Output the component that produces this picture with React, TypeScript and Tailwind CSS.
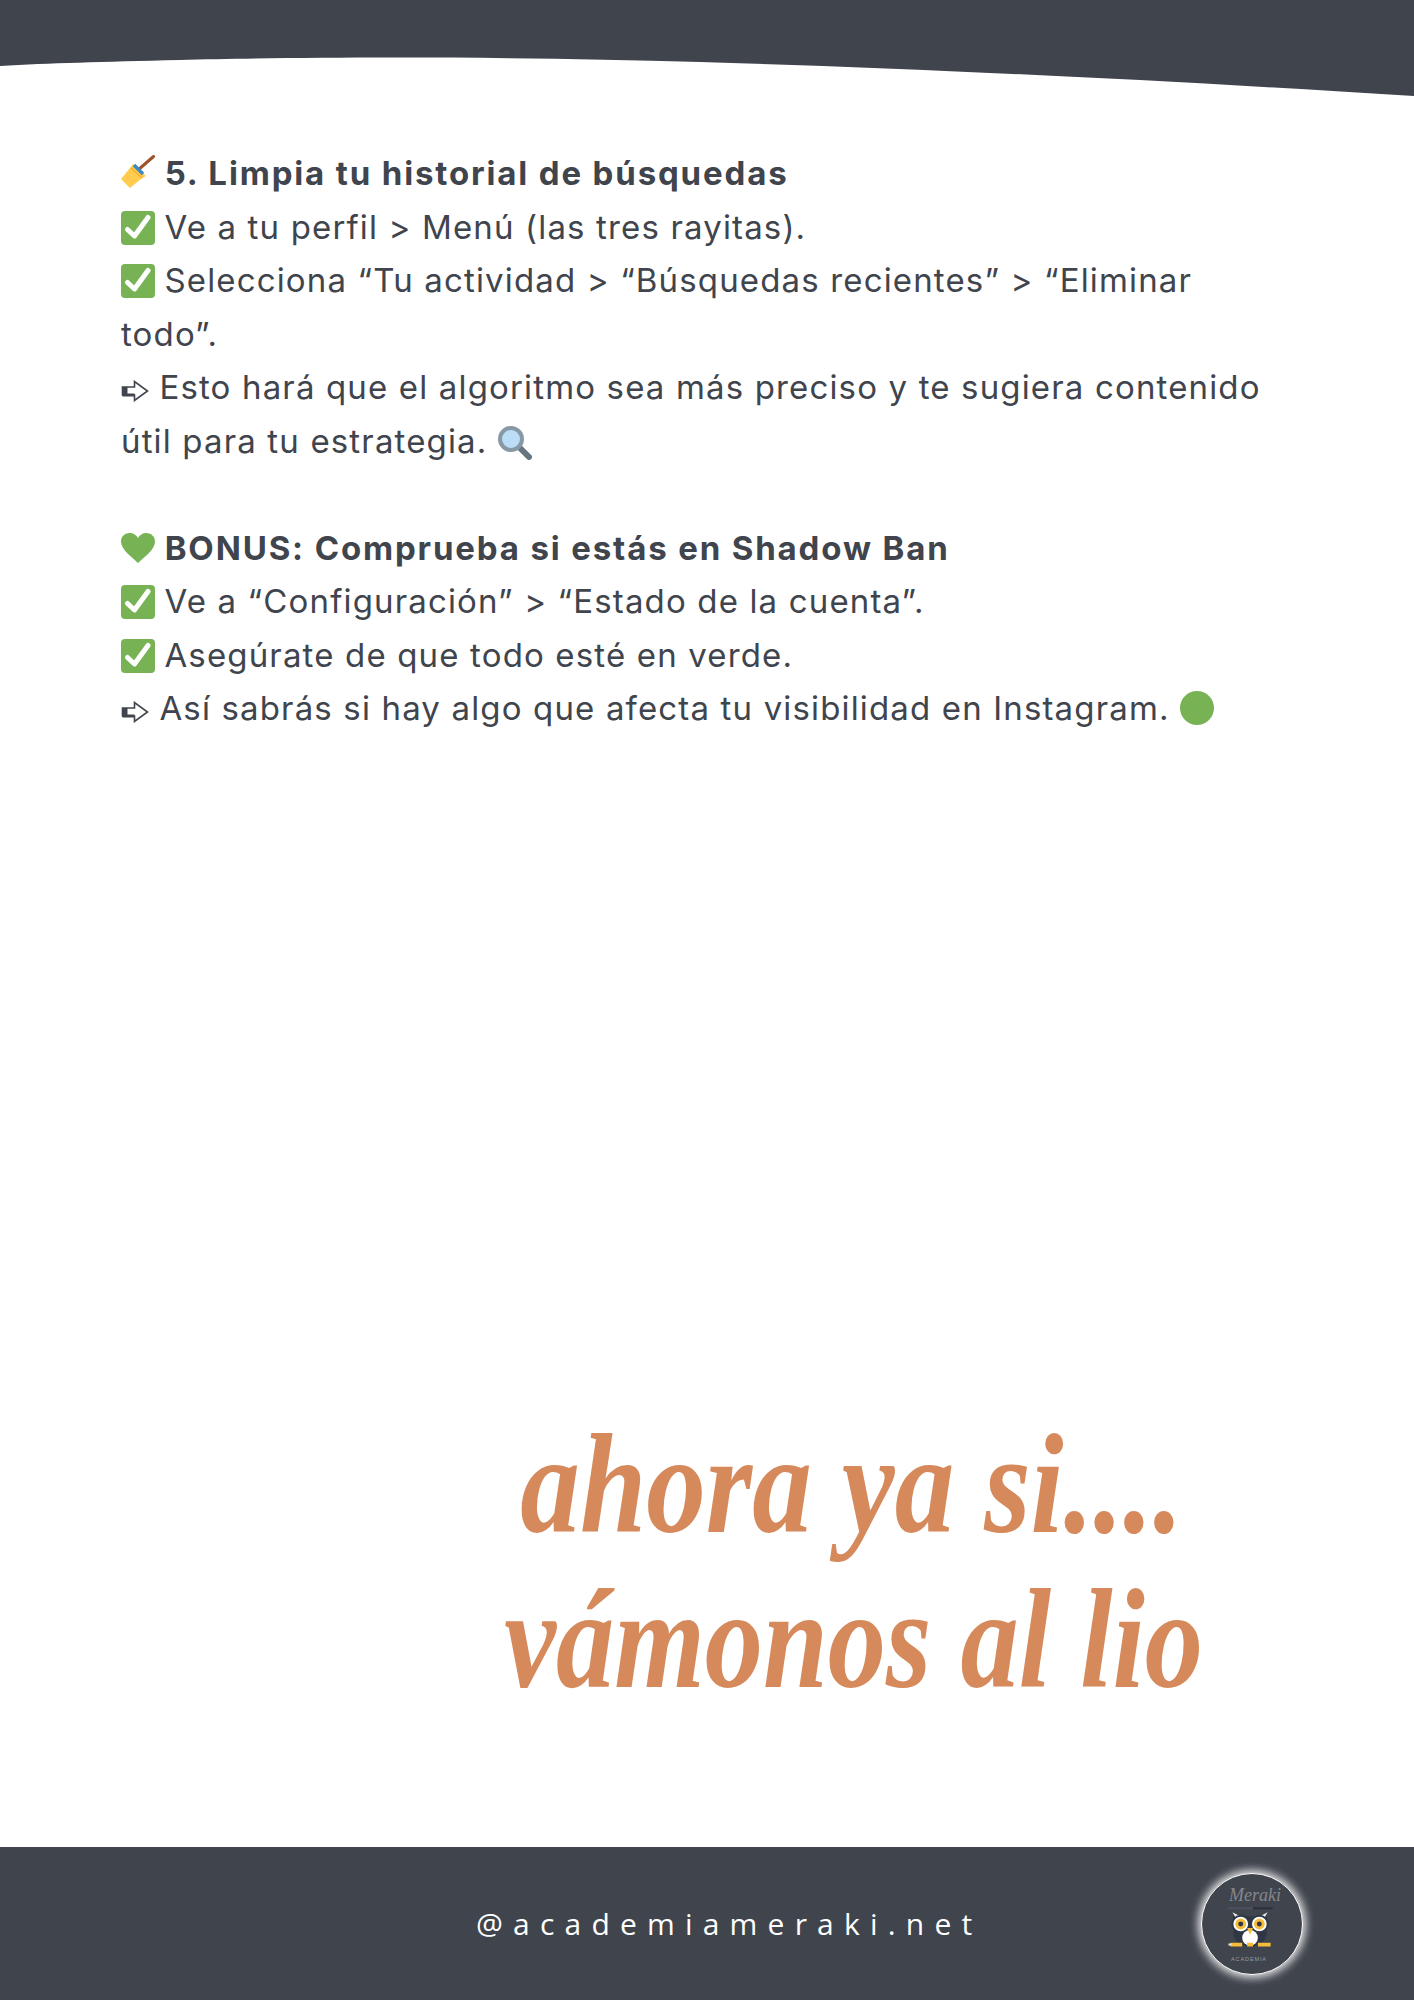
const sans = "font-['Inter','Liberation_Sans',sans-serif]";

function Check() {
  return (
    <svg viewBox="0 0 34 34" className="inline-block w-[34px] h-[34px] align-[-6px] mr-[-1px]">
      <rect width="34" height="34" rx="4" fill="#77b255" />
      <path d="M6.5 18.500l7 6.500L27 6.500" fill="none" stroke="#fff" strokeWidth="5" strokeLinecap="round" strokeLinejoin="round" />
    </svg>
  );
}

function Arrow() {
  return (
    <svg viewBox="0 0 28 22" className="inline-block w-[28px] h-[22px] align-[-3px]">
      <path d="M1.500 7h12V1.500L26.500 11 13.500 20.500V15h-12z" fill="#fff" stroke="#40444d" strokeWidth="1.6" />
      <path d="M1.500 7h5v8h-5z" fill="#40444d" />
      <path d="M13.500 15h-12" stroke="#40444d" strokeWidth="3" />
    </svg>
  );
}

function Broom() {
  return (
    <svg viewBox="0 0 34 34" className="inline-block w-[34px] h-[34px] align-[-4px]">
      <path d="M32.500 1.500L17 15" stroke="#a0522d" strokeWidth="3" strokeLinecap="round" />
      <path d="M12 9l13 12-5 3-11 9-9-9 9-11z" fill="#ffcc4d" />
      <path d="M10 13l11 10" stroke="#ffac33" strokeWidth="1.5" />
      <path d="M13 10l9 9" stroke="#3b88c3" strokeWidth="3.500" />
    </svg>
  );
}

function Glass() {
  return (
    <svg viewBox="0 0 34 34" className="inline-block w-[34px] h-[34px] align-[-7px]">
      <path d="M21 21l10 10" stroke="#66757f" strokeWidth="6" strokeLinecap="round" />
      <circle cx="13" cy="13" r="11" fill="#bbddf5" stroke="#8899a6" strokeWidth="4" />
    </svg>
  );
}

function Heart() {
  return (
    <svg viewBox="0 0 34 30" className="inline-block w-[34px] h-[30px] align-[-3px]">
      <path d="M17 30C11 24 0 17 0 8.500 0 3.500 4 0 8.500 0 12.500 0 15.500 2 17 5 18.500 2 21.500 0 25.500 0 30 0 34 3.500 34 8.500 34 17 23 24 17 30z" fill="#77b255" />
    </svg>
  );
}

function Dot() {
  return <span className="inline-block w-[34px] h-[34px] rounded-full bg-[#77b255] align-[-5px]" />;
}

function Logo() {
  return (
    <div className="relative w-[102px] h-[102px] rounded-full bg-[#40444d] border border-white shadow-[0_0_9px_3px_rgba(255,255,255,0.85)] overflow-hidden">
      <span className="absolute left-[27px] top-[9px] text-[18px] leading-[24px] italic text-[#85878d] font-['Liberation_Serif',serif]">Meraki</span>
      <svg viewBox="0 0 102 102" className="absolute left-0 top-0 w-full h-full">
        <path d="M26 35h26" stroke="#4b5160" strokeWidth="2" />
        <path d="M52 35h20" stroke="#2c303a" strokeWidth="2" />
        <path d="M32 40l5 3h24l5-3v20c0 8-7 14-17 14s-17-6-17-14z" fill="#2f3744" />
        <path d="M31 39l6 3h4l-6 4zM67 39l-6 3h-4l6 4z" fill="#e8e8ea" />
        <circle cx="39.500" cy="51" r="8.500" fill="#fff" stroke="#2f3744" strokeWidth="2" />
        <circle cx="58.500" cy="51" r="8.500" fill="#fff" stroke="#2f3744" strokeWidth="2" />
        <circle cx="39.500" cy="51" r="5.500" fill="#f6bd3b" />
        <circle cx="58.500" cy="51" r="5.500" fill="#f6bd3b" />
        <circle cx="39.500" cy="51" r="2.500" fill="#2f3744" />
        <circle cx="58.500" cy="51" r="2.500" fill="#2f3744" />
        <ellipse cx="49" cy="65" rx="8" ry="8" fill="#fff" />
        <path d="M46 55h6l-3 7z" fill="#f6bd3b" />
        <path d="M29 70h12v4H29zM46 70h6v4h-6zM57 70h13v4H57z" fill="#f6bd3b" />
        <path d="M27 71h3v2h-3z" fill="#e8e8ea" />
      </svg>
      <span className="absolute left-[29px] top-[81px] text-[5.500px] leading-[8px] tracking-[0.9px] text-[#9a9ca1] font-['Liberation_Sans',sans-serif]">ACADEMIA</span>
    </div>
  );
}

function Line({ children }: { children: React.ReactNode }) {
  return <p className="font-normal tracking-[1.15px]">{children}</p>;
}

function Heading({ children }: { children: React.ReactNode }) {
  return <p className="font-bold tracking-[1.85px]">{children}</p>;
}

export default function App() {
  return (
    <div className="w-[1414px] h-[2000px] bg-white flex flex-col overflow-hidden">
      <svg viewBox="0 0 1414 97" className="w-[1414px] h-[97px] shrink-0 block">
        <path d="M0 0H1414V96C1130 78 900 68 700 62 500 56 300 57 180 60 100 62 50 63 0 66z" fill="#40444d" />
      </svg>

      <div className={`pl-[121px] pr-[130px] pt-[50px] text-[33px] leading-[53.5px] text-[#40444d] ${sans}`}>
        <Heading><Broom /> 5. Limpia tu historial de búsquedas</Heading>
        <Line><Check /> Ve a tu perfil &gt; Menú (las tres rayitas).</Line>
        <Line><Check /> Selecciona “Tu actividad &gt; “Búsquedas recientes” &gt; “Eliminar todo”.</Line>
        <Line><Arrow /> Esto hará que el algoritmo sea más preciso y te sugiera contenido útil para tu estrategia. <Glass /></Line>
        <div className="h-[53.5px]" />
        <Heading><Heart /> BONUS: Comprueba si estás en Shadow Ban</Heading>
        <Line><Check /> Ve a “Configuración” &gt; “Estado de la cuenta”.</Line>
        <Line><Check /> Asegúrate de que todo esté en verde.</Line>
        <Line><Arrow /> Así sabrás si hay algo que afecta tu visibilidad en Instagram. <Dot /></Line>
      </div>

      <div className="flex-1 flex flex-col justify-end items-end pr-[211px] pb-[130px] text-[#d68a5c] font-['Liberation_Serif',serif] italic font-bold">
        <p className="text-[142px] leading-[155px] whitespace-nowrap scale-x-[0.84] origin-right mr-[20px]">ahora ya si....</p>
        <p className="text-[142px] leading-[155px] whitespace-nowrap scale-x-[0.82] origin-right">vámonos al lio</p>
      </div>

      <div className="h-[153px] shrink-0 bg-[#40444d] flex items-center pl-[476px] pr-[111px] justify-between">
        <span className="text-[30px] tracking-[10.200px] text-white font-['Open_Sans',sans-serif]">@academiameraki.net</span>
        <Logo />
      </div>
    </div>
  );
}
